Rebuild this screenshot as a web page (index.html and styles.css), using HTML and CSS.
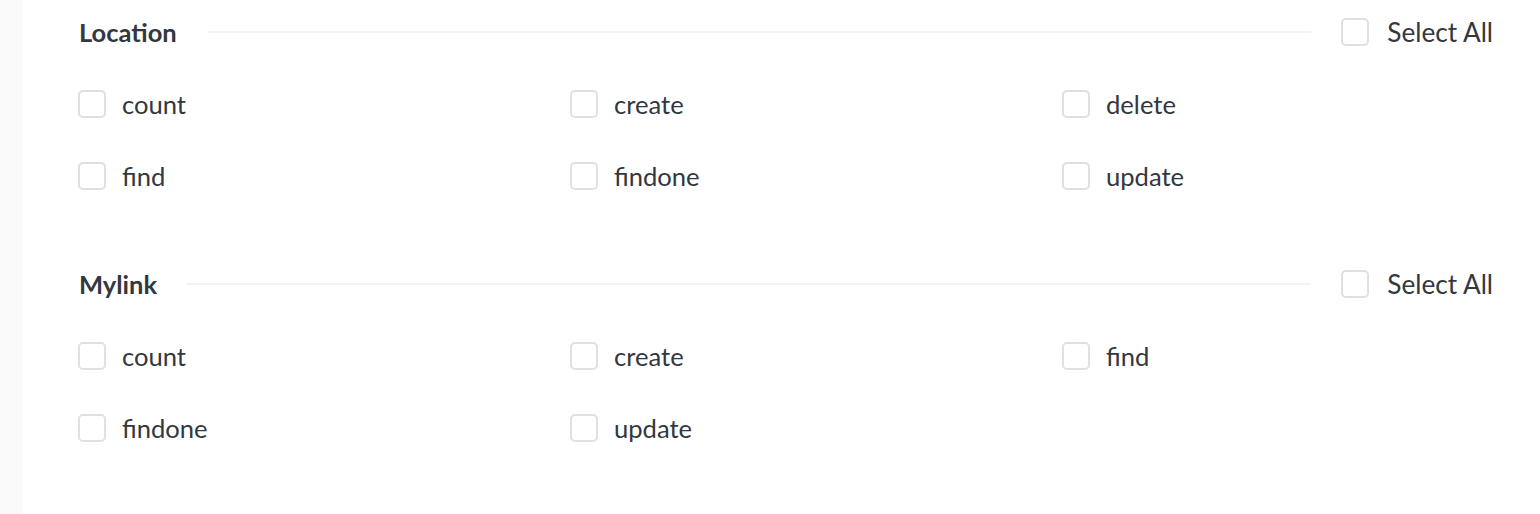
FILE: index.html
```html
<!DOCTYPE html>
<html>
<head>
<meta charset="utf-8">
<link rel="stylesheet" href="styles.css">
</head>
<body>
<div class="page">
  <div class="sidebar"></div>
  <div class="content">
    <section class="group">
      <div class="group-head">
        <h2 class="group-title">Location</h2>
        <div class="group-line"></div>
        <label class="check check-all"><span class="box"></span><span class="label">Select All</span></label>
      </div>
      <div class="grid">
        <label class="check"><span class="box"></span><span class="label">count</span></label>
        <label class="check"><span class="box"></span><span class="label">create</span></label>
        <label class="check"><span class="box"></span><span class="label">delete</span></label>
        <label class="check"><span class="box"></span><span class="label">find</span></label>
        <label class="check"><span class="box"></span><span class="label">findone</span></label>
        <label class="check"><span class="box"></span><span class="label">update</span></label>
      </div>
    </section>
    <section class="group">
      <div class="group-head">
        <h2 class="group-title">Mylink</h2>
        <div class="group-line"></div>
        <label class="check check-all"><span class="box"></span><span class="label">Select All</span></label>
      </div>
      <div class="grid">
        <label class="check"><span class="box"></span><span class="label">count</span></label>
        <label class="check"><span class="box"></span><span class="label">create</span></label>
        <label class="check"><span class="box"></span><span class="label">find</span></label>
        <label class="check"><span class="box"></span><span class="label">findone</span></label>
        <label class="check"><span class="box"></span><span class="label">update</span></label>
      </div>
    </section>
  </div>
</div>
</body>
</html>
```

FILE: styles.css
```css
* { box-sizing: border-box; }
html, body {
  margin: 0;
  padding: 0;
  background: #ffffff;
  font-family: Lato, "Open Sans", sans-serif;
  color: #333740;
}
.page {
  display: flex;
  width: 1540px;
  height: 514px;
  overflow: hidden;
}
.sidebar {
  width: 22px;
  flex: none;
  background: #fafafb;
}
.content {
  flex: 1;
  padding: 17px 47px 0 56px;
}
.group {
  margin-bottom: 57px;
}
.group-head {
  display: flex;
  align-items: center;
  height: 30px;
  margin-bottom: 21px;
  padding-left: 1px;
}
.group-title {
  margin: 0;
  font-size: 25.5px;
  font-weight: 700;
  line-height: 30px;
  color: #333740;
}
.group-line {
  flex: 1;
  height: 2px;
  background: #f3f3f5;
  margin: 0 30px 0 30px;
}
.grid {
  display: grid;
  grid-template-columns: 492px 492px 1fr;
  grid-auto-rows: 72px;
}
.check {
  display: flex;
  align-items: center;
  cursor: pointer;
}
.box {
  width: 28px;
  height: 28px;
  flex: none;
  border: 2px solid #e0e0e0;
  border-radius: 5px;
  background: #fff;
}
.label {
  margin-left: 16px;
  font-size: 25.6px;
  line-height: 30px;
  color: #333740;
}
.check-all .label {
  margin-left: 18px;
  font-size: 26.2px;
}
```
